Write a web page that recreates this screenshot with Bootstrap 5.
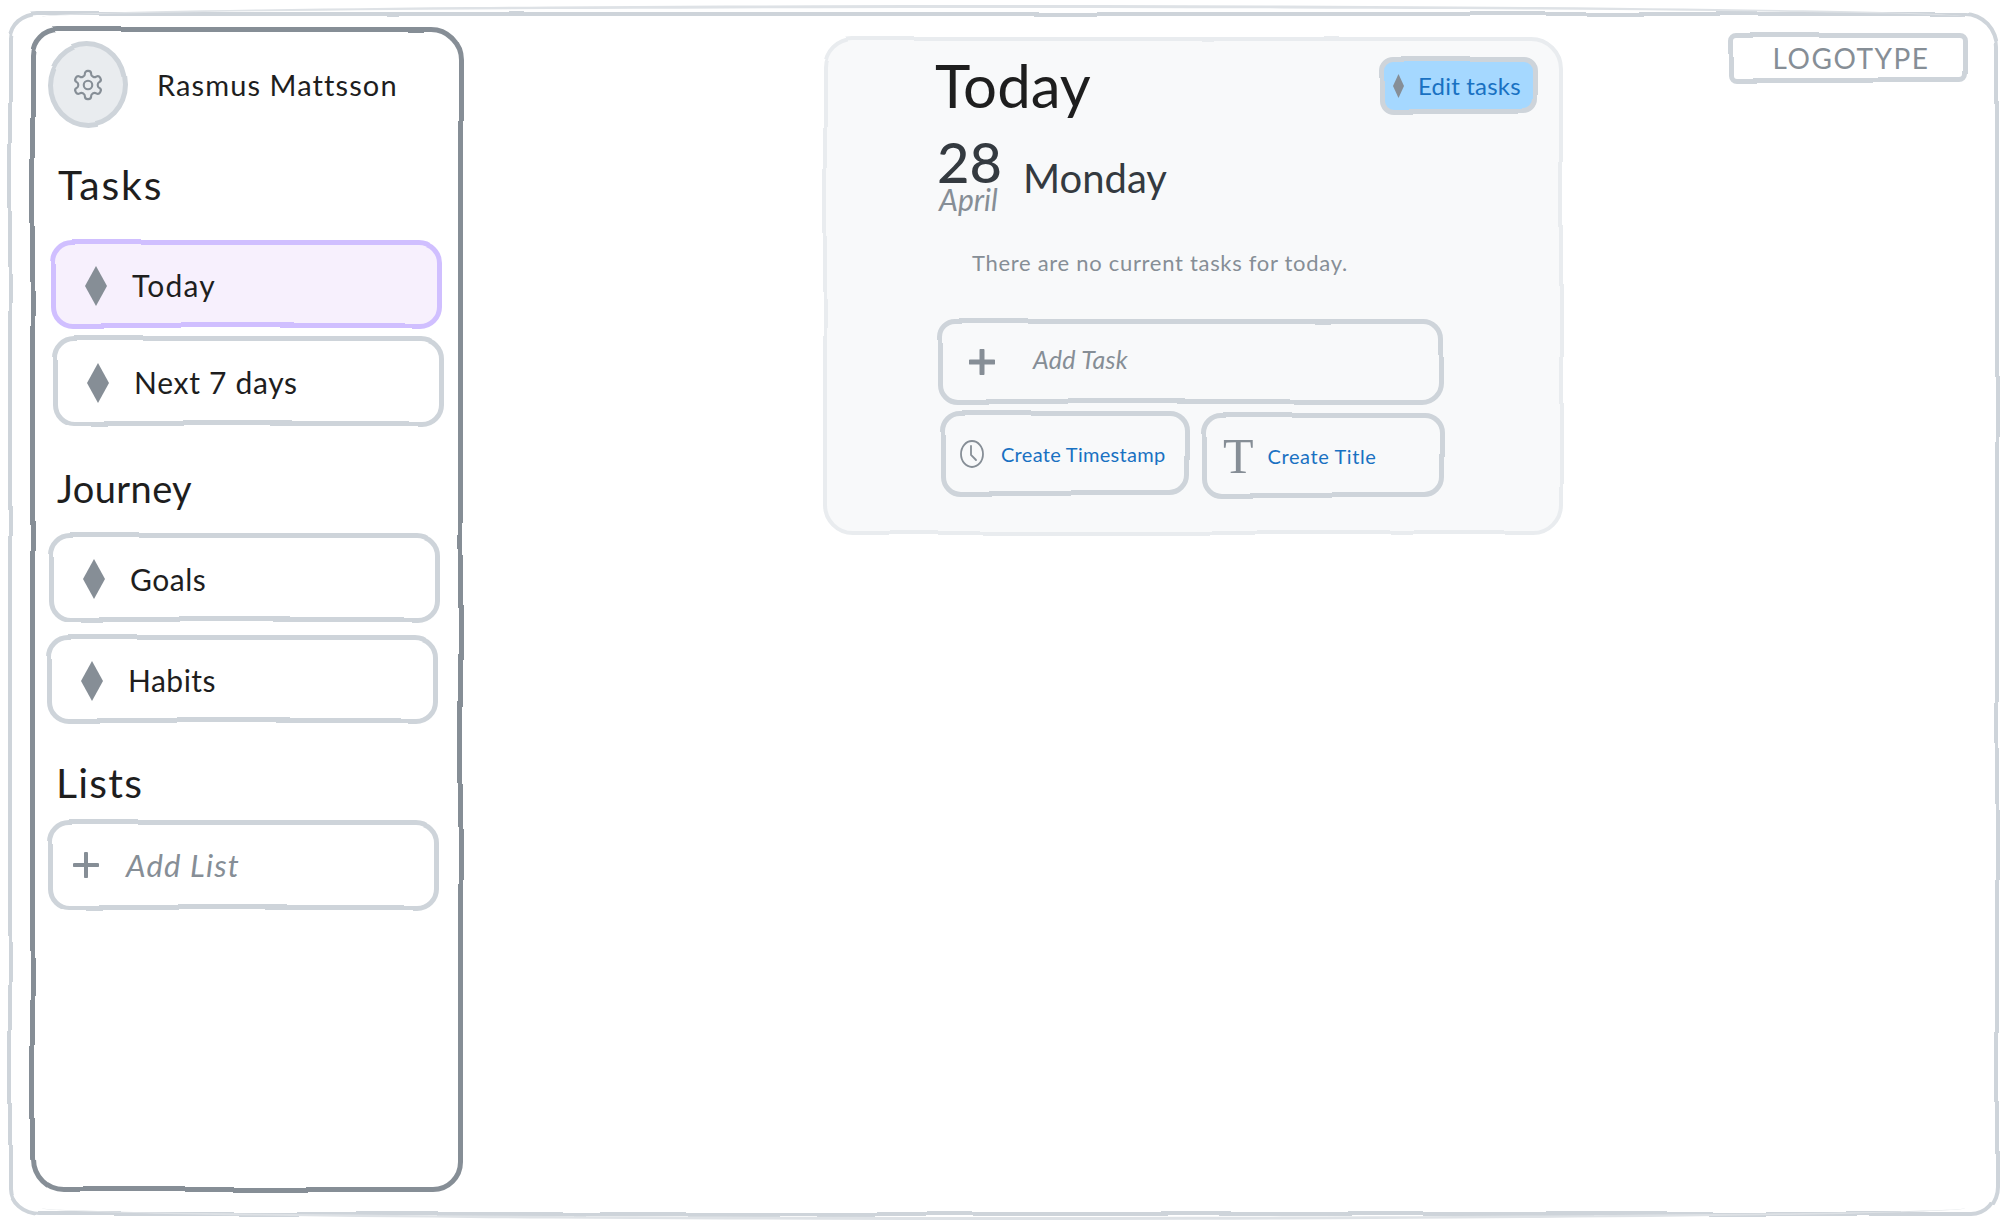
<!DOCTYPE html>
<html lang="en">
<head>
  <meta charset="UTF-8">
  <meta name="viewport" content="width=device-width, initial-scale=1">
  <title>Today</title>
  <link href="https://cdn.jsdelivr.net/npm/bootstrap@5.3.6/dist/css/bootstrap.min.css" rel="stylesheet">
  <style>
    html, body { height: 100%; background: #fff; }
    body { font-family: "Lato", "Open Sans", sans-serif; color: #1e1e1e; overflow: hidden; }

    /* hand drawn outline: the border and fill sit on a pseudo element so the text stays sharp */
    .sketchy { --sk-w: 5px; --sk-line: #ced4da; --sk-fill: transparent; --sk-r: 22px; position: relative; isolation: isolate; background: transparent; border: var(--sk-w) solid transparent; }
    .sketchy::before { content: ""; position: absolute; inset: calc(var(--sk-w) * -1); z-index: -1; background: var(--sk-fill); border: var(--sk-w) solid var(--sk-line); border-radius: var(--sk-r); filter: url(#wobble); }

    .sketch-frame { --sk-w: 4px; --sk-r: 30px 34px 28px 32px / 26px 36px 30px 28px; position: relative; width: 1991px; height: 1204px; margin: 12px 0 0 8px; padding-left: 18px; }
    .sketch-frame::after { content: ""; position: absolute; inset: -11px 30px -8px; z-index: -1; border-top: 3px solid #dee2e6; border-bottom: 3px solid #dee2e6; border-radius: 50% / 12px; }

    .side-panel { --sk-line: #868e96; --sk-r: 28px 32px 30px 34px; width: 433px; height: 1165px; margin-top: 11px; flex: none; }
    .user-pic { --sk-fill: #e9ecef; --sk-r: 50%; width: 81px; height: 85px; margin: 10px 30px 0 12px; }
    .user-name { margin-top: 10px; margin-left: -1px; font-size: 29px; letter-spacing: 1.1px; }
    .side-title { height: 55px; margin-left: 23px; font-size: 38px; line-height: 50px; font-weight: 400; }
    .title-tasks { font-size: 41px; letter-spacing: 1.8px; }
    .title-lists { font-size: 41px; letter-spacing: 1.2px; margin-left: 21px; }
    .mt-tasks { margin-top: 33px; margin-bottom: 25px; }
    .mt-journey { margin-top: 37px; margin-bottom: 15px; margin-left: 22px; letter-spacing: .4px; }
    .mt-lists { margin-top: 35px; margin-bottom: 7px; }

    .side-item { width: 391px; height: 88px; padding: 3px 0 0 30px; font-size: 30px; letter-spacing: .5px; }
    .side-item svg { flex: none; }
    .side-item span { margin-left: 25px; }
    .item-active { --sk-fill: #f7f0fd; --sk-line: #d0bfff; letter-spacing: 1.2px; }
    .item-today { margin-left: 15px; }
    .item-next { margin: 8px 0 0 17px; height: 90px; letter-spacing: .7px; }
    .item-goals { margin-left: 13px; height: 89px; }
    .item-habits { margin: 13px 0 0 11px; }
    .item-add { margin-left: 12px; height: 90px; padding: 0 0 0 21px; }
    .item-add span { margin-left: 27px; font-size: 31px; font-style: italic; letter-spacing: 1.2px; color: #868e96; }

    .task-card { --sk-w: 4px; --sk-line: #e9ecef; --sk-fill: #f8f9fa; --sk-r: 30px 32px 30px 30px; width: 740px; height: 498px; margin: 21px 0 0 360px; flex: none; }
    .card-head { padding: 16px 21px 0 108px; }
    .day-title { font-size: 60px; line-height: 56px; margin: 0; font-weight: 400; }
    .edit-btn { --sk-fill: #a5d8ff; --sk-r: 14px; width: 159px; height: 57px; padding: 0 0 0 9px; gap: 14px; font-size: 24px; letter-spacing: .2px; color: #1971c2; }
    .edit-btn:hover { color: #1971c2; background: transparent; border-color: transparent; }
    .date-row { margin: 26px 0 0 110px; color: #343a40; }
    .date-num { font-size: 56px; line-height: 43px; font-weight: 500; }
    .date-month { margin-left: 2px; font-size: 30px; line-height: 33px; color: #868e96; font-style: italic; }
    .date-day { margin-left: 21px; font-size: 40px; }
    .empty-note { margin: 34px 0 0 145px; font-size: 22px; line-height: 26px; color: #868e96; letter-spacing: .7px; }
    .add-task { --sk-r: 18px 20px 22px 20px; width: 506px; height: 85px; margin: 43px 0 0 110px; padding-left: 27px; }
    .add-task span { margin-left: 38px; margin-top: -3px; font-size: 25px; font-style: italic; letter-spacing: .3px; color: #868e96; }
    .action-row { margin: 7px 0 0 113px; gap: 11px; }
    .action-btn { --sk-r: 20px; height: 85px; padding: 0; font-size: 20px; letter-spacing: .3px; color: #1971c2; }
    .action-btn:hover { color: #1971c2; background: transparent; border-color: transparent; }
    .action-time { width: 250px; padding-left: 15px; gap: 17px; }
    .action-time svg { flex: none; }
    .action-head { width: 244px; padding-left: 17px; gap: 14px; margin-top: 2px; letter-spacing: .6px; }
    .serif-t { font-family: "Liberation Serif", serif; font-size: 50px; line-height: 50px; letter-spacing: 0; color: #868e96; }

    .logo-box { --sk-r: 8px; width: 240px; height: 50px; margin: 17px 0 0 165px; padding-left: 6px; flex: none; font-size: 28px; letter-spacing: 1.5px; color: #868e96; }
  </style>
</head>
<body>
  <svg width="0" height="0" class="position-absolute">
    <filter id="wobble" x="-5%" y="-10%" width="110%" height="120%">
      <feTurbulence type="fractalNoise" baseFrequency=".009" numOctaves="1" seed="7"/>
      <feDisplacementMap in="SourceGraphic" scale="5"/>
    </filter>
  </svg>

  <div class="sketch-frame sketchy d-flex align-items-start">

    <aside class="side-panel sketchy">
      <div class="d-flex align-items-center">
        <div class="user-pic sketchy d-flex align-items-center justify-content-center">
          <svg width="34" height="34" viewBox="0 0 24 24" fill="none" stroke="#868e96" stroke-width="1.5" stroke-linecap="round" stroke-linejoin="round"><path d="M12.22 2h-.44a2 2 0 0 0-2 2v.18a2 2 0 0 1-1 1.73l-.43.25a2 2 0 0 1-2 0l-.15-.08a2 2 0 0 0-2.73.73l-.22.38a2 2 0 0 0 .73 2.73l.15.1a2 2 0 0 1 1 1.72v.51a2 2 0 0 1-1 1.74l-.15.09a2 2 0 0 0-.73 2.73l.22.38a2 2 0 0 0 2.73.73l.15-.08a2 2 0 0 1 2 0l.43.25a2 2 0 0 1 1 1.73V20a2 2 0 0 0 2 2h.44a2 2 0 0 0 2-2v-.18a2 2 0 0 1 1-1.73l.43-.25a2 2 0 0 1 2 0l.15.08a2 2 0 0 0 2.73-.73l.22-.39a2 2 0 0 0-.73-2.73l-.15-.08a2 2 0 0 1-1-1.74v-.5a2 2 0 0 1 1-1.74l.15-.09a2 2 0 0 0 .73-2.73l-.22-.38a2 2 0 0 0-2.73-.73l-.15.08a2 2 0 0 1-2 0l-.43-.25a2 2 0 0 1-1-1.73V4a2 2 0 0 0-2-2z"/><circle cx="12" cy="12" r="3"/></svg>
        </div>
        <div class="user-name">Rasmus Mattsson</div>
      </div>

      <h2 class="side-title title-tasks mt-tasks">Tasks</h2>
      <div class="side-item sketchy item-active item-today d-flex align-items-center">
        <svg width="22" height="40" viewBox="0 0 22 40"><path d="M11 0 22 20 11 40 0 20Z" fill="#868e96"/></svg>
        <span>Today</span>
      </div>
      <div class="side-item sketchy item-next d-flex align-items-center">
        <svg width="22" height="40" viewBox="0 0 22 40"><path d="M11 0 22 20 11 40 0 20Z" fill="#868e96"/></svg>
        <span>Next 7 days</span>
      </div>

      <h2 class="side-title mt-journey">Journey</h2>
      <div class="side-item sketchy item-goals d-flex align-items-center">
        <svg width="22" height="40" viewBox="0 0 22 40"><path d="M11 0 22 20 11 40 0 20Z" fill="#868e96"/></svg>
        <span>Goals</span>
      </div>
      <div class="side-item sketchy item-habits d-flex align-items-center">
        <svg width="22" height="40" viewBox="0 0 22 40"><path d="M11 0 22 20 11 40 0 20Z" fill="#868e96"/></svg>
        <span>Habits</span>
      </div>

      <h2 class="side-title title-lists mt-lists">Lists</h2>
      <div class="side-item sketchy item-add d-flex align-items-center">
        <svg width="26" height="26" viewBox="0 0 26 26"><path d="M1.5 13h23M13 1.5v23" stroke="#868e96" stroke-width="4" stroke-linecap="round"/></svg>
        <span>Add List</span>
      </div>
    </aside>

    <main class="card task-card sketchy">
      <div class="card-head d-flex justify-content-between align-items-start">
        <h1 class="day-title">Today</h1>
        <button type="button" class="btn edit-btn sketchy d-flex align-items-center">
          <svg width="11" height="24" viewBox="0 0 11 24"><path d="M5.5 0 11 12 5.5 24 0 12Z" fill="#868e96"/></svg>
          Edit tasks
        </button>
      </div>
      <div class="date-row d-flex align-items-center">
        <div>
          <div class="date-num">28</div>
          <div class="date-month">April</div>
        </div>
        <div class="date-day">Monday</div>
      </div>
      <p class="empty-note">There are no current tasks for today.</p>
      <div class="add-task sketchy d-flex align-items-center">
        <svg width="26" height="26" viewBox="0 0 26 26"><path d="M1.5 13h23M13 1.5v23" stroke="#868e96" stroke-width="5" stroke-linecap="round"/></svg>
        <span>Add Task</span>
      </div>
      <div class="action-row d-flex align-items-start">
        <button type="button" class="btn action-btn action-time sketchy d-flex align-items-center">
          <svg width="24" height="28" viewBox="0 0 24 28" fill="none" stroke="#868e96" stroke-width="1.8" stroke-linecap="round"><ellipse cx="12" cy="14" rx="11" ry="13"/><path d="M11 6v9l5 5"/></svg>
          Create Timestamp
        </button>
        <button type="button" class="btn action-btn action-head sketchy d-flex align-items-center">
          <span class="serif-t">T</span>
          Create Title
        </button>
      </div>
    </main>

    <div class="logo-box sketchy d-flex align-items-center justify-content-center">LOGOTYPE</div>
  </div>

  <script src="https://cdn.jsdelivr.net/npm/bootstrap@5.3.6/dist/js/bootstrap.bundle.min.js"></script>
</body>
</html>
